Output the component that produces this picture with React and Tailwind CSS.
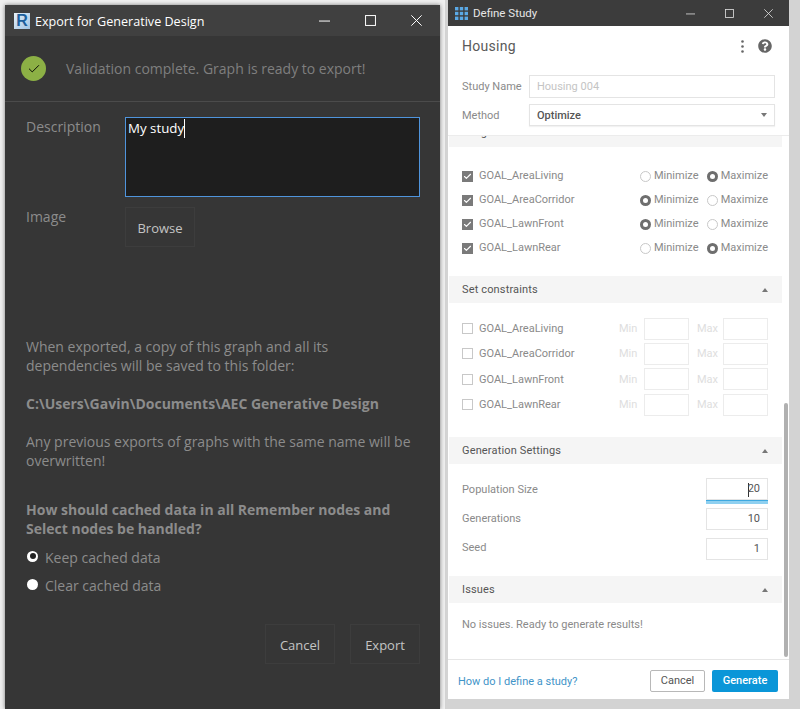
import React from 'react';
import { Check } from 'lucide-react';
import { FaQuestionCircle } from 'react-icons/fa';

const goals = [
  { name: 'GOAL_AreaLiving', pick: 'max' },
  { name: 'GOAL_AreaCorridor', pick: 'min' },
  { name: 'GOAL_LawnFront', pick: 'min' },
  { name: 'GOAL_LawnRear', pick: 'max' },
];

const constraintRows = [
  { name: 'GOAL_AreaLiving', h: 'h-[25px]' },
  { name: 'GOAL_AreaCorridor', h: 'h-[25px]' },
  { name: 'GOAL_LawnFront', h: 'h-[26px]' },
  { name: 'GOAL_LawnRear', h: 'h-[25px]' },
];

// window buttons, drawn thin like the native ones
function WinControls({ w, gapClass, className }) {
  return (
    <div className={`ml-auto flex items-center ${gapClass} ${className}`}>
      <svg width={w} height={w} viewBox="0 0 10 10" stroke="currentColor" strokeWidth="0.9" fill="none">
        <path d="M0 5.5H10" />
      </svg>
      <svg width={w} height={w} viewBox="0 0 10 10" stroke="currentColor" strokeWidth="0.9" fill="none">
        <rect x="0.5" y="0.5" width="9" height="9" />
      </svg>
      <svg width={w} height={w} viewBox="0 0 10 10" stroke="currentColor" strokeWidth="0.9" fill="none">
        <path d="M0.3 0.3L9.7 9.7M9.7 0.3L0.3 9.7" />
      </svg>
    </div>
  );
}

function Radio({ on, label, className }) {
  return (
    <div className={`flex items-center gap-[3px] ${className}`}>
      {on ? (
        <span className="w-[11px] h-[11px] rounded-full bg-[#6e6e6e] flex items-center justify-center">
          <span className="w-[5px] h-[5px] rounded-full bg-white" />
        </span>
      ) : (
        <span className="w-[11px] h-[11px] rounded-full border border-[#c8c8c8] bg-white" />
      )}
      <span className="text-[#8a8a8a] pt-px">{label}</span>
    </div>
  );
}

function SectionHeader({ title }) {
  return (
    <div className="h-[27px] bg-[#f5f5f5] flex items-center justify-between pl-[13px] pr-[14px]">
      <span className="text-[#555] pt-[2px] tracking-[0.15px]">{title}</span>
      <span className="w-0 h-0 border-x-[3px] border-x-transparent border-b-[4px] border-b-[#777]" />
    </div>
  );
}

function NumberField({ value, caret }) {
  return (
    <div className="w-[62px] h-[22px] border border-[#e4e4e4] bg-white flex items-center justify-end pr-[7px] pt-px text-[#555]">
      {caret && <span className="w-px h-[14px] bg-[#333] -mr-[1px]" />}
      {value}
    </div>
  );
}

function DarkButton({ children, className }) {
  return (
    <div className={`h-[40px] border border-[#3d3d3d] flex items-center justify-center pt-[4px] text-[13px] text-[#c4c4c4] ${className}`}>
      {children}
    </div>
  );
}

function ExportWindow() {
  return (
    <div className="w-[435px] h-[704px] bg-[#363636] shadow-[0_0_4px_rgba(0,0,0,0.5)] font-['Open_Sans',sans-serif] text-[14px] text-[#8c8c8c]">
      <div className="h-[31px] bg-[#404040] flex items-center pl-[9px] text-white">
        <div className="w-[16px] h-[16px] bg-gradient-to-br from-[#e8f1fa] to-[#9fc2e2] flex items-center justify-center font-['Liberation_Sans',sans-serif] font-bold text-[16px] leading-none text-[#1c5f9c]">
          R
        </div>
        <span className="ml-[5px] pt-[3px] text-[12.6px]">Export for Generative Design</span>
        <WinControls w={11} gapClass="gap-[35px]" className="pr-[18px]" />
      </div>
      <div className="h-[66px] flex items-center pl-[16px] border-b border-[#4b4b4b]">
        <div className="w-[25px] h-[25px] rounded-full bg-[#8cb045] flex items-center justify-center">
          <Check size={14} strokeWidth={1.6} className="text-black" />
        </div>
        <span className="ml-[20px] text-[14px] text-[#7f7f7f]">Validation complete. Graph is ready to export!</span>
      </div>
      <div className="pl-[21px] pr-[20px] pt-[15px]">
        <div className="flex">
          <span className="w-[99px] -mt-px">Description</span>
          <div className="w-[295px] h-[80px] bg-[#1e1e1e] border border-[#4f94dc] px-[2px] text-[13.3px] text-white flex items-start">
            <span className="pt-px">My study</span>
            <span className="w-px h-[19px] bg-white mt-px" />
          </div>
        </div>
        <div className="flex mt-[10px]">
          <span className="w-[99px] -mt-px">Image</span>
          <DarkButton className="w-[70px]">Browse</DarkButton>
        </div>
        <p className="mt-[90px] leading-[19px]">
          When exported, a copy of this graph and all its<br />
          dependencies will be saved to this folder:
        </p>
        <p className="mt-[19px] font-bold leading-[19px]">C:\Users\Gavin\Documents\AEC Generative Design</p>
        <p className="mt-[19px] leading-[19px]">
          Any previous exports of graphs with the same name will be<br />
          overwritten!
        </p>
        <p className="mt-[30px] font-bold leading-[19px]">
          How should cached data in all Remember nodes and<br />
          Select nodes be handled?
        </p>
        <div className="mt-[10px] flex items-center h-[19px] pl-[1px]">
          <span className="w-[11px] h-[11px] rounded-full bg-white flex items-center justify-center -mt-[3px]">
            <span className="w-[6px] h-[6px] rounded-full bg-[#222]" />
          </span>
          <span className="ml-[7px]">Keep cached data</span>
        </div>
        <div className="mt-[9px] flex items-center h-[19px] pl-[1px]">
          <span className="w-[11px] h-[11px] rounded-full bg-white -mt-[3px]" />
          <span className="ml-[7px]">Clear cached data</span>
        </div>
        <div className="mt-[29px] flex justify-end gap-[15px]">
          <DarkButton className="w-[70px]">Cancel</DarkButton>
          <DarkButton className="w-[70px]">Export</DarkButton>
        </div>
      </div>
    </div>
  );
}

function StudyWindow() {
  return (
    <div className="relative w-[341px] h-[699px] bg-white font-['Roboto',sans-serif] text-[11px] text-[#8a8a8a] flex flex-col">
      <div className="h-[26px] bg-[#3c3c3c] flex items-center pl-[7px] text-[#e6e6e6] text-[11.5px]">
        <svg width="13" height="13" viewBox="0 0 13 13" fill="#5aa9e6">
          <rect x="0" y="0" width="3.4" height="3.4" />
          <rect x="4.8" y="0" width="3.4" height="3.4" />
          <rect x="9.6" y="0" width="3.4" height="3.4" />
          <rect x="0" y="4.8" width="3.4" height="3.4" />
          <rect x="4.8" y="4.8" width="3.4" height="3.4" />
          <rect x="9.6" y="4.8" width="3.4" height="3.4" />
          <rect x="0" y="9.6" width="3.4" height="3.4" />
          <rect x="4.8" y="9.6" width="3.4" height="3.4" />
          <rect x="9.6" y="9.6" width="3.4" height="3.4" />
        </svg>
        <span className="ml-[5px] pt-[2px]">Define Study</span>
        <WinControls w={9} gapClass="gap-[30px]" className="pr-[16px] text-[#e0e0e0]" />
      </div>

      <div className="h-[110px] border-b border-[#ececec] pl-[14px] pr-[14px]">
        <div className="h-[49px] flex items-center justify-between pb-[9px]">
          <span className="text-[14px] text-[#5a5a5a] tracking-[0.3px]">Housing</span>
          <div className="flex items-center gap-[14px] pr-[3px] text-[#666]">
            <svg width="3" height="13" viewBox="0 0 3 13" fill="currentColor">
              <circle cx="1.5" cy="1.5" r="1.3" />
              <circle cx="1.5" cy="6.5" r="1.3" />
              <circle cx="1.5" cy="11.5" r="1.3" />
            </svg>
            <FaQuestionCircle size={14} />
          </div>
        </div>
        <div className="flex items-center h-[22px]">
          <span className="w-[67px] pt-[2px]">Study Name</span>
          <div className="w-[246px] h-[23px] border border-[#e4e4e4] flex items-center pl-[7px] pt-[2px] text-[#c4c4c4]">Housing 004</div>
        </div>
        <div className="flex items-center h-[22px] mt-[7px]">
          <span className="w-[67px] pt-[2px]">Method</span>
          <div className="w-[246px] h-[22px] border border-[#e4e4e4] flex items-center justify-between pl-[7px] pr-[7px] text-[#555] font-medium shadow-[0_1px_1px_rgba(0,0,0,0.05)]">
            <span className="pt-[2px]">Optimize</span>
            <span className="w-0 h-0 border-x-[3px] border-x-transparent border-t-[4px] border-t-[#777]" />
          </div>
        </div>
      </div>

      <div className="flex-1 min-h-0 overflow-hidden pr-[7px] pl-px">
        <div className="h-[11px] bg-[#f5f5f5] overflow-hidden pl-[13px]">
          <div className="-mt-[10px] h-[14px] leading-[14px] text-[#555]">Set goals</div>
        </div>
        <div className="pt-[17px] h-[129px]">
          {goals.map((g) => (
            <div key={g.name} className="h-[24px] flex items-center pl-[13px] pr-[14px]">
              <span className="w-[11px] h-[11px] bg-[#7a7a7a] flex items-center justify-center">
                <Check size={9} strokeWidth={3} className="text-white" />
              </span>
              <span className="ml-[6px] pt-px">{g.name}</span>
              <div className="ml-auto w-[128px] flex">
                <Radio on={g.pick === 'min'} label="Minimize" className="w-[68px]" />
                <Radio on={g.pick === 'max'} label="Maximize" />
              </div>
            </div>
          ))}
        </div>
        <SectionHeader title="Set constraints" />
        <div className="pt-[13px] h-[134px]">
          {constraintRows.map((r) => (
            <div key={r.name} className={`${r.h} flex items-center pl-[13px] pr-[14px]`}>
              <span className="w-[11px] h-[11px] border border-[#c8c8c8]" />
              <span className="ml-[6px] pt-[2px]">{r.name}</span>
              <div className="ml-auto flex items-center">
                <span className="w-[25px] pt-[2px] text-[#dedede]">Min</span>
                <span className="w-[45px] h-[22px] border border-[#ececec]" />
                <span className="ml-[8px] w-[26px] pt-[2px] text-[#dedede]">Max</span>
                <span className="w-[45px] h-[22px] border border-[#ececec]" />
              </div>
            </div>
          ))}
        </div>
        <SectionHeader title="Generation Settings" />
        <div className="pt-[14px] h-[112px] pl-[13px] pr-[14px]">
          <div className="flex items-center justify-between h-[22px]">
            <span className="pt-[2px]">Population Size</span>
            <NumberField value="20" caret />
          </div>
          <div className="ml-auto w-[62px] h-[4px] bg-[#8fd0f0] border-t border-[#3fa9e0]" />
          <div className="flex items-center justify-between h-[22px] mt-[4px]">
            <span>Generations</span>
            <NumberField value="10" />
          </div>
          <div className="flex items-center justify-between h-[23px] mt-[7px]">
            <span>Seed</span>
            <NumberField value="1" />
          </div>
        </div>
        <SectionHeader title="Issues" />
        <div className="pt-[14px] pl-[13px]">No issues. Ready to generate results!</div>
      </div>

      <div className="h-[40px] shrink-0 border-t border-[#e6e6e6] flex items-center pl-[10px] pr-[11px] pt-[2px]">
        <span className="text-[#3f94c8] pt-[3px]">How do I define a study?</span>
        <div className="ml-auto w-[55px] h-[22px] rounded-[2px] border border-[#b8b8b8] flex items-center justify-center pt-[2px] text-[#555]">Cancel</div>
        <div className="ml-[7px] w-[66px] h-[22px] rounded-[2px] bg-[#0a96d8] flex items-center justify-center pt-[2px] text-white font-medium">Generate</div>
      </div>

      <div className="absolute left-[336px] top-[403px] w-[4px] h-[254px] rounded-full bg-[#b0b0b0]" />
    </div>
  );
}

export default function App() {
  return (
    <div className="w-[800px] h-[709px] bg-[#d3d3d3] flex overflow-hidden">
      <div className="w-[445px] h-[709px] bg-[#efefef] pt-[5px] pl-[5px] shrink-0">
        <ExportWindow />
      </div>
      <div className="ml-[3px]">
        <StudyWindow />
      </div>
    </div>
  );
}
